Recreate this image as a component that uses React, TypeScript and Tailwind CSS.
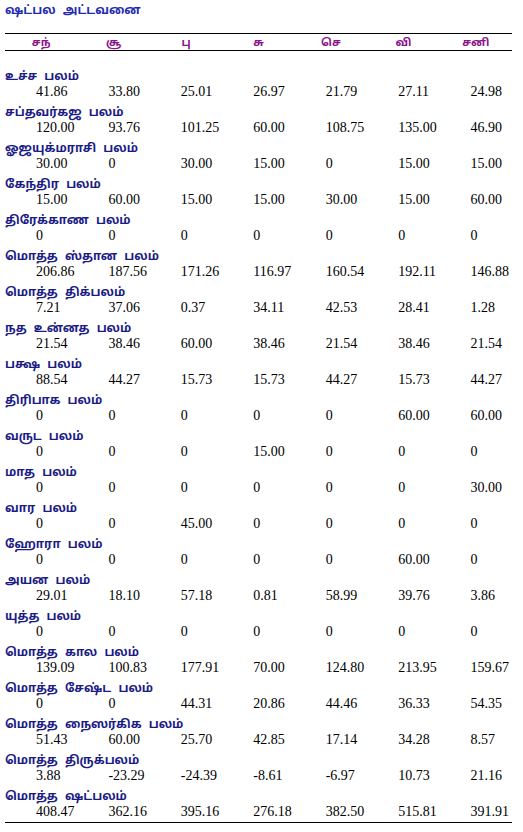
const PLANETS = ["சந்", "சூ", "பு", "சு", "செ", "வி", "சனி"];

type Row = { label: string; values: string[] };

const ROWS: Row[] = [
  { label: "உச்ச பலம்", values: ["41.86", "33.80", "25.01", "26.97", "21.79", "27.11", "24.98"] },
  { label: "சப்தவர்கஜ பலம்", values: ["120.00", "93.76", "101.25", "60.00", "108.75", "135.00", "46.90"] },
  { label: "ஓஜயுக்மராசி பலம்", values: ["30.00", "0", "30.00", "15.00", "0", "15.00", "15.00"] },
  { label: "கேந்திர பலம்", values: ["15.00", "60.00", "15.00", "15.00", "30.00", "15.00", "60.00"] },
  { label: "திரேக்காண பலம்", values: ["0", "0", "0", "0", "0", "0", "0"] },
  { label: "மொத்த ஸ்தான பலம்", values: ["206.86", "187.56", "171.26", "116.97", "160.54", "192.11", "146.88"] },
  { label: "மொத்த திக்பலம்", values: ["7.21", "37.06", "0.37", "34.11", "42.53", "28.41", "1.28"] },
  { label: "நத உன்னத பலம்", values: ["21.54", "38.46", "60.00", "38.46", "21.54", "38.46", "21.54"] },
  { label: "பக்ஷ பலம்", values: ["88.54", "44.27", "15.73", "15.73", "44.27", "15.73", "44.27"] },
  { label: "திரிபாக பலம்", values: ["0", "0", "0", "0", "0", "60.00", "60.00"] },
  { label: "வருட பலம்", values: ["0", "0", "0", "15.00", "0", "0", "0"] },
  { label: "மாத பலம்", values: ["0", "0", "0", "0", "0", "0", "30.00"] },
  { label: "வார பலம்", values: ["0", "0", "45.00", "0", "0", "0", "0"] },
  { label: "ஹோரா பலம்", values: ["0", "0", "0", "0", "0", "60.00", "0"] },
  { label: "அயன பலம்", values: ["29.01", "18.10", "57.18", "0.81", "58.99", "39.76", "3.86"] },
  { label: "யுத்த பலம்", values: ["0", "0", "0", "0", "0", "0", "0"] },
  { label: "மொத்த கால பலம்", values: ["139.09", "100.83", "177.91", "70.00", "124.80", "213.95", "159.67"] },
  { label: "மொத்த சேஷ்ட பலம்", values: ["0", "0", "44.31", "20.86", "44.46", "36.33", "54.35"] },
  { label: "மொத்த நைஸர்கிக பலம்", values: ["51.43", "60.00", "25.70", "42.85", "17.14", "34.28", "8.57"] },
  { label: "மொத்த திருக்பலம்", values: ["3.88", "-23.29", "-24.39", "-8.61", "-6.97", "10.73", "21.16"] },
  { label: "மொத்த ஷட்பலம்", values: ["408.47", "362.16", "395.16", "276.18", "382.50", "515.81", "391.91"] },
];

const tamil = "font-['Noto_Sans','Noto_Sans_Tamil','Lohit_Tamil',sans-serif]";

export default function App() {
  return (
    <div className="min-h-[832px] w-[523px] bg-white">
      <div className="px-[5px] pt-[2px]">
        <div className={`${tamil} h-[16px] text-[12px] font-bold leading-[16px] text-[#1f2cb0] [word-spacing:4px]`}>
          ஷட்பல அட்டவனை
        </div>

        <div className="mt-[15px] w-[507px] border-y border-black">
          <div className="grid h-[16px] grid-cols-7 items-center">
            {PLANETS.map((p) => (
              <div
                key={p}
                className={`${tamil} text-center text-[11px] font-bold leading-[14px] text-[#8b168b]`}
              >
                {p}
              </div>
            ))}
          </div>
        </div>

        <div className="mt-[17px] w-[507px] border-b border-black">
          {ROWS.map((row, i) => (
            <div key={row.label} className={i === ROWS.length - 1 ? "pb-[2px]" : "pb-[4px]"}>
              <div className={`${tamil} h-[16px] text-[12px] font-bold leading-[16px] text-[#1b1b86] [word-spacing:4px]`}>
                {row.label}
              </div>
              <div className="grid h-[16px] grid-cols-7 font-['Liberation_Serif',serif] text-[14px] leading-[16px] text-black">
                {row.values.map((v, j) => (
                  <div key={j} className="pl-[31px]">
                    {v}
                  </div>
                ))}
              </div>
            </div>
          ))}
        </div>
      </div>
    </div>
  );
}
